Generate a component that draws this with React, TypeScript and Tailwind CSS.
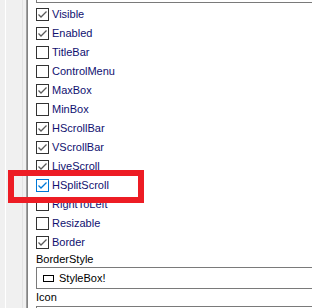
import React from "react";

const items: [string, boolean][] = [
  ["Visible", true],
  ["Enabled", true],
  ["TitleBar", false],
  ["ControlMenu", false],
  ["MaxBox", true],
  ["MinBox", false],
  ["HScrollBar", true],
  ["VScrollBar", true],
  ["LiveScroll", true],
  ["HSplitScroll", true],
  ["RightToLeft", false],
  ["Resizable", false],
  ["Border", true],
];

function Box({ checked, hot }: { checked: boolean; hot?: boolean }) {
  return (
    <div
      className={
        "w-[13px] h-[13px] bg-white border flex-none relative " +
        (hot ? "border-[#0078d7]" : "border-[#333333]")
      }
    >
      {checked && (
        <svg width="11" height="11" viewBox="0 0 11 11" className="absolute left-0 top-0">
          <path
            d="M1.5 5.5 L4 8 L9.5 2.5"
            fill="none"
            stroke={hot ? "#0078d7" : "#5a5a5a"}
            strokeWidth="1.3"
          />
        </svg>
      )}
    </div>
  );
}

export default function App() {
  return (
    <div
      className="w-[312px] h-[308px] overflow-hidden flex bg-white relative text-[11px] leading-none"
      style={{ fontFamily: '"Liberation Sans", Arial, sans-serif' }}
    >
      <div className="w-[28px] h-full flex-none flex bg-[#f0f0f0]">
        <div className="w-[5px]" />
        <div className="w-px bg-white" />
        <div className="w-[16px]" />
        <div className="w-px bg-[#e3e3e3]" />
        <div className="w-[3px]" />
        <div className="w-px bg-[#a0a0a0]" />
        <div className="w-px bg-[#828282]" />
      </div>
      <div className="flex-1 flex flex-col pl-[8px]">
        <div className="h-[3px] border-l border-b border-[#7a7a7a] flex-none" />
        <div className="pt-[2px] flex flex-col flex-none">
          {items.map(([label, checked]) => (
            <div key={label} className="h-[19px] flex items-center gap-[3px] flex-none">
              <Box checked={checked} hot={label === "HSplitScroll"} />
              <span className="text-[#101070]">{label}</span>
            </div>
          ))}
        </div>
        <div className="h-[15px] flex items-center text-black flex-none">BorderStyle</div>
        <div className="h-[22px] border border-[#7a7a7a] border-r-0 flex items-center pl-[6px] gap-[5px] flex-none">
          <div className="w-[11px] h-[7px] border border-black" />
          <span className="text-black">StyleBox!</span>
        </div>
        <div className="h-[17px] flex items-center text-black flex-none">Icon</div>
        <div className="h-[22px] border border-[#7a7a7a] border-r-0 flex-none" />
      </div>
      <div className="absolute left-[8px] top-[170px] w-[136px] h-[33px] border-[6px] border-[#ed1c24]" />
    </div>
  );
}
